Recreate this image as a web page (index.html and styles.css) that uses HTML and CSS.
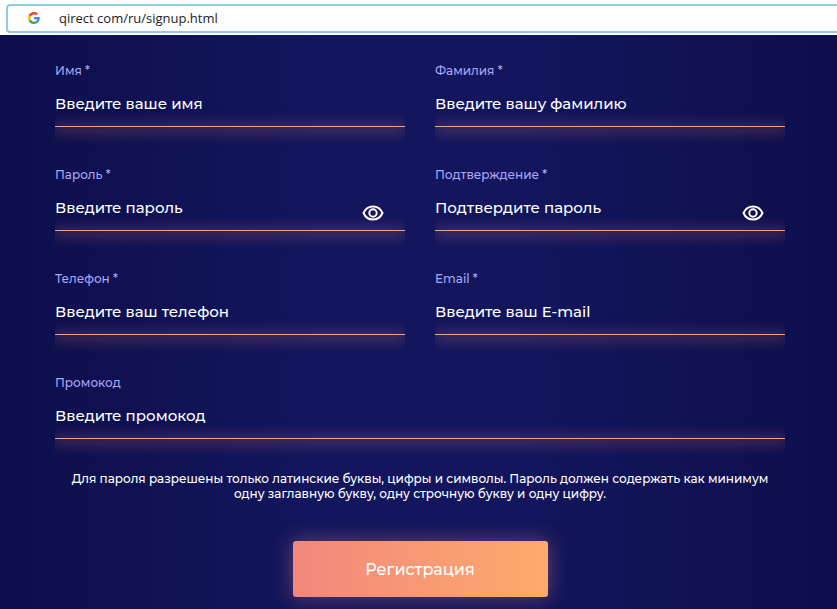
FILE: index.html
```html
<!DOCTYPE html>
<html lang="ru">
<head>
<meta charset="UTF-8">
<meta name="viewport" content="width=device-width, initial-scale=1.0">
<title>Регистрация</title>
    <link rel="stylesheet" href="styles.css">
</head>
<body>
    <header class="browser-bar">
        <div class="address">
            <svg class="google" viewBox="0 0 48 48" aria-hidden="true">
                <path fill="#ea4335" d="M24 9.5c3.5 0 6.7 1.2 9.2 3.6l6.9-6.9C35.9 2.4 30.5 0 24 0 14.6 0 6.5 5.4 2.6 13.2l8 6.2C12.4 13.7 17.7 9.5 24 9.5z"/>
                <path fill="#4285f4" d="M47 24.6c0-1.6-.2-3.1-.4-4.6H24v9h12.9c-.6 3-2.2 5.5-4.7 7.2l7.7 6C44.4 38 47 31.8 47 24.6z"/>
                <path fill="#fbbc05" d="M10.5 28.6c-.5-1.5-.8-3-.8-4.6s.3-3.100.8-4.6l-8-6.2C.9 16.5 0 20.1 0 24s.9 7.5 2.6 10.8l7.9-6.2z"/>
                <path fill="#34a853" d="M24 48c6.5 0 11.900-2.1 15.900-5.8l-7.7-6c-2.2 1.5-4.9 2.3-8.2 2.3-6.3 0-11.6-4.2-13.5-9.9l-8 6.2C6.5 42.6 14.6 48 24 48z"/>
            </svg>
            <input class="url" type="text" value="qirect com/ru/signup.html" aria-label="Адрес">
        </div>
    </header>

    <main class="page">
        <form class="signup">
            <div class="fields">
                <!-- row 1 -->
                <div class="field">
                    <label for="name">Имя *</label>
                    <div class="control">
                        <input type="text" id="name" placeholder="Введите ваше имя">
                    </div>
                </div>
                <div class="field">
                    <label for="surname">Фамилия *</label>
                    <div class="control">
                        <input type="text" id="surname" placeholder="Введите вашу фамилию">
                    </div>
                </div>

                <!-- row 2 -->
                <div class="field">
                    <label for="password">Пароль *</label>
                    <div class="control">
                        <input type="password" id="password" placeholder="Введите пароль">
                        <button class="toggle" type="button" aria-label="Показать пароль">
                            <svg viewBox="0 0 22 16" aria-hidden="true">
                                <path d="M1.5 8C3.3 4 6.8 1.5 11 1.5S18.7 4 20.5 8C18.7 12 15.2 14.5 11 14.5S3.3 12 1.5 8z"/>
                                <circle cx="11" cy="8" r="3.7"/>
                            </svg>
                        </button>
                    </div>
                </div>
                <div class="field">
                    <label for="confirm">Подтверждение *</label>
                    <div class="control">
                        <input type="password" id="confirm" placeholder="Подтвердите пароль">
                        <button class="toggle" type="button" aria-label="Показать пароль">
                            <svg viewBox="0 0 22 16" aria-hidden="true">
                                <path d="M1.5 8C3.3 4 6.8 1.5 11 1.5S18.7 4 20.5 8C18.7 12 15.2 14.5 11 14.5S3.3 12 1.5 8z"/>
                                <circle cx="11" cy="8" r="3.7"/>
                            </svg>
                        </button>
                    </div>
                </div>

                <!-- row 3 -->
                <div class="field">
                    <label for="phone">Телефон *</label>
                    <div class="control">
                        <input type="tel" id="phone" placeholder="Введите ваш телефон">
                    </div>
                </div>
                <div class="field">
                    <label for="email">Email *</label>
                    <div class="control">
                        <input type="email" id="email" placeholder="Введите ваш E-mail">
                    </div>
                </div>

                <!-- row 4 -->
                <div class="field wide">
                    <label for="promo">Промокод</label>
                    <div class="control">
                        <input type="text" id="promo" placeholder="Введите промокод">
                    </div>
                </div>
            </div>

            <p class="hint">Для пароля разрешены только латинские буквы, цифры и символы. Пароль должен содержать как минимум одну заглавную букву, одну строчную букву и одну цифру.</p>
            <button class="submit" type="submit">Регистрация</button>
        </form>
    </main>
</body>
</html>
```
FILE: styles.css
```css
*{
    box-sizing: border-box;
}
body{
    margin: 0;
    min-height: 100vh;
    display: flex;
    flex-direction: column;
    background-color: #ffffff;
    font-family: Montserrat, Inter, sans-serif;
    font-weight: 500;
}
input, button{
    font-family: inherit;
    font-weight: inherit;
    border: 0;
    padding: 0;
    background: none;
    outline: none;
}
.browser-bar{
    padding: 4px 0 2px 6px;
}
.address{
    display: flex;
    align-items: center;
    gap: 19px;
    height: 29px;
    padding: 0 0 2px 20px;
    border: 2px solid #93c9e4;
    border-right: 0;
    border-radius: 4px 0 0 4px;
}
.google{
    width: 12px;
    height: 12px;
}
.url{
    flex: 1;
    font-family: "Open Sans", "Noto Sans", sans-serif;
    font-weight: 400;
    font-size: 13px;
    color: #222222;
}
.page{
    flex: 1;
    padding: 28px 52px 12px 55px;
    background: linear-gradient(90deg, #0d0e4b 0%, #13165d 38%, #13165d 62%, #0d0e4b 100%);
}
.signup{
    display: flex;
    flex-direction: column;
    align-items: center;
}
.fields{
    width: 100%;
    display: grid;
    grid-template-columns: 1fr 1fr;
    gap: 40px 30px;
}
.wide{
    grid-column: 1 / -1;
}
.field label{
    display: block;
    font-size: 12px;
    line-height: 16px;
    color: #aba6f5;
}
.control{
    position: relative;
    display: flex;
    align-items: center;
    height: 48px;
    padding-top: 4px;
}
/* glowing underline, cut off at both ends */
.control::after{
    content: "";
    position: absolute;
    left: 0;
    right: 0;
    bottom: 0;
    height: 1px;
    background-color: #f0a08e;
    box-shadow: 0 2px 14px 2px rgba(242,132,110,0.5);
    clip-path: inset(-24px 0);
}
.control input{
    flex: 1;
    min-width: 0;
    height: 24px;
    margin-bottom: 4px;
    font-size: 15px;
    color: #ffffff;
}
.control input::placeholder{
    color: #ffffff;
    opacity: 1;
}
.toggle{
    height: 16px;
    margin: 8px 21px 0 0;
    cursor: pointer;
}
.toggle svg{
    display: block;
    width: 22px;
    height: 16px;
    fill: none;
    stroke: #ffffff;
    stroke-width: 2;
}
.hint{
    max-width: 710px;
    margin: 32px 0 40px;
    font-size: 12px;
    line-height: 15px;
    text-align: center;
    color: #ffffff;
}
.submit{
    width: 255px;
    height: 56px;
    border-radius: 3px;
    background: linear-gradient(90deg, #f2877c, #fdab6c);
    box-shadow: 0 0 20px rgba(242,135,124,0.4);
    font-size: 16px;
    color: #ffffff;
    cursor: pointer;
}
```
